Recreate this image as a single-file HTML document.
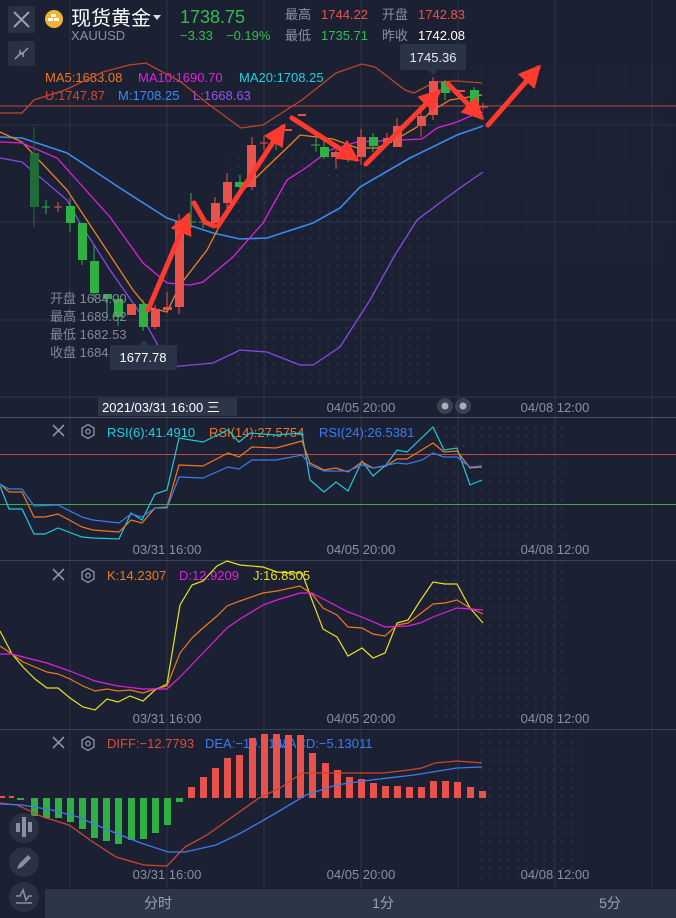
<!DOCTYPE html>
<html><head><meta charset="utf-8"><style>
html,body{margin:0;padding:0;background:#1b2132;}
svg{display:block;font-family:"Liberation Sans","Noto Sans CJK SC",sans-serif;}
</style></head><body>
<svg width="676" height="918" viewBox="0 0 676 918" xmlns="http://www.w3.org/2000/svg">
<defs>
<pattern id="dots" width="9" height="9" patternUnits="userSpaceOnUse"><circle cx="4.5" cy="4.5" r="1.6" fill="#263049"/></pattern>
<marker id="ah" viewBox="0 0 10 10" refX="8" refY="5" markerWidth="4.5" markerHeight="4.5" orient="auto"><path d="M0,0L10,5L0,10z" fill="#ff3b30"/></marker>
</defs>
<rect width="676" height="918" fill="#1b2132"/>
<rect x="230" y="150" width="200" height="240" fill="url(#dots)" opacity="0.6"/>
<rect x="430" y="60" width="240" height="200" fill="url(#dots)" opacity="0.35"/>
<rect x="430" y="420" width="140" height="300" fill="url(#dots)" opacity="0.6"/>
<rect x="480" y="730" width="100" height="150" fill="url(#dots)" opacity="0.6"/>
<g stroke="#2a3245" stroke-width="1">
<line x1="70" y1="0" x2="70" y2="888"/><line x1="167" y1="0" x2="167" y2="888"/><line x1="264" y1="0" x2="264" y2="888"/><line x1="361" y1="0" x2="361" y2="888"/><line x1="458" y1="0" x2="458" y2="888"/><line x1="555" y1="0" x2="555" y2="888"/><line x1="652" y1="0" x2="652" y2="888"/>
<line x1="0" y1="125" x2="676" y2="125"/><line x1="0" y1="222" x2="676" y2="222"/><line x1="0" y1="320" x2="676" y2="320"/>
</g>
<line x1="0" y1="106" x2="676" y2="106" stroke="#b84a44" stroke-width="1"/>
<rect x="8" y="6" width="27" height="27" rx="2" fill="#2a3142"/>
<path d="M14,12L29,27M29,12L14,27" stroke="#9aa1ae" stroke-width="2"/>
<rect x="8" y="41" width="27" height="25" rx="2" fill="#2a3142"/>
<path d="M15,59L20,54M28,48L23,53M20,54l0,-4M20,54l4,0M23,53l0,4M23,53l-4,0" stroke="#8a91a0" stroke-width="1.6" fill="none"/>
<circle cx="54" cy="19" r="9" fill="#f2b431"/>
<rect x="51" y="14" width="5" height="3" fill="#fff"/><rect x="48" y="18" width="5" height="3" fill="#fff"/><rect x="54" y="18" width="5" height="3" fill="#fff"/>
<text x="71" y="25" font-size="20" fill="#fff">现货黄金</text>
<path d="M153,15l8,0l-4,5z" fill="#ddd"/>
<text x="180" y="23" font-size="18" fill="#2fbf4e">1738.75</text>
<text x="71" y="40" font-size="13" fill="#8a90a0">XAUUSD</text>
<text x="180" y="40" font-size="13" fill="#2fbf4e">−3.33</text>
<text x="226" y="40" font-size="13" fill="#2fbf4e">−0.19%</text>
<text x="285" y="19" font-size="13" fill="#8a90a0">最高</text>
<text x="321" y="19" font-size="13" fill="#f0504a">1744.22</text>
<text x="382" y="19" font-size="13" fill="#8a90a0">开盘</text>
<text x="418" y="19" font-size="13" fill="#f0504a">1742.83</text>
<text x="285" y="40" font-size="13" fill="#8a90a0">最低</text>
<text x="321" y="40" font-size="13" fill="#2fbf4e">1735.71</text>
<text x="382" y="40" font-size="13" fill="#8a90a0">昨收</text>
<text x="418" y="40" font-size="13" fill="#fff">1742.08</text>
<text x="45" y="82" font-size="13" fill="#f07820">MA5:1683.08</text>
<text x="138" y="82" font-size="13" fill="#e020e0">MA10:1690.70</text>
<text x="239" y="82" font-size="13" fill="#20d0e0">MA20:1708.25</text>
<text x="45" y="100" font-size="13" fill="#d04a30">U:1747.87</text>
<text x="118" y="100" font-size="13" fill="#3a8cf0">M:1708.25</text>
<text x="193" y="100" font-size="13" fill="#9a50f0">L:1668.63</text>
<g fill="none" stroke-width="1.3">
<polyline stroke="#c0442c" points="0,113 22,113 34,100 65,90 103,72 129,65 146,63 181,82 207,103 241,128 263,125 302,100 336,73 362,64 375,67 405,90 414,93 435,82 457,81 482,83"/>
<polyline stroke="#3a8cf0" stroke-width="1.6" points="0,137 22,138 67,153 123,190 167,218 213,233 240,239 267,238 313,223 340,208 360,187 410,158 457,135 483,126"/>
<polyline stroke="#8a48e8" points="0,158 22,162 67,200 80,223 110,270 140,313 170,367 213,363 240,350 267,352 300,365 313,365 340,347 370,300 395,255 417,220 433,208 457,190 483,172"/>
<polyline stroke="#f08020" points="0,132 22,142 67,190 100,240 133,290 147,307 167,312 180,285 207,250 233,200 267,167 290,145 300,135 333,139 357,148 377,148 400,137 417,127 430,112 450,100 482,95"/>
<polyline stroke="#e020e0" points="0,142 22,143 57,158 83,187 110,217 143,263 167,283 190,285 203,282 233,257 263,223 287,180 307,167 330,150 357,142 422,139 437,128 457,122 473,115 483,112"/>
</g>
<g stroke-width="1">
<line x1="34" y1="127" x2="34" y2="227" stroke="#1f6b3a"/><rect x="30" y="153" width="9" height="54" fill="#1f6b3a"/>
<line x1="46" y1="200" x2="46" y2="214" stroke="#2fb043"/><line x1="42" y1="207" x2="50" y2="207" stroke="#2fb043"/>
<line x1="58" y1="202" x2="58" y2="212" stroke="#e8524a"/><line x1="54" y1="207" x2="62" y2="207" stroke="#e8524a"/>
<line x1="70" y1="198" x2="70" y2="232" stroke="#2fb043"/><rect x="66" y="206" width="9" height="17" fill="#2fb043"/>
<line x1="82" y1="223" x2="82" y2="265" stroke="#2fb043"/><rect x="78" y="223" width="9" height="37" fill="#2fb043"/>
<line x1="94" y1="245" x2="94" y2="300" stroke="#2fb043"/><rect x="90" y="261" width="9" height="32" fill="#2fb043"/>
<line x1="107" y1="294" x2="107" y2="318" stroke="#2fb043"/><rect x="103" y="294" width="9" height="5" fill="#2fb043"/>
<line x1="118" y1="295" x2="118" y2="326" stroke="#2fb043"/><rect x="114" y="299" width="9" height="18" fill="#2fb043"/>
<rect x="127" y="304" width="9" height="11" fill="#e8524a"/>
<line x1="143" y1="300" x2="143" y2="331" stroke="#2fb043"/><rect x="139" y="304" width="9" height="23" fill="#2fb043"/>
<line x1="155" y1="305" x2="155" y2="329" stroke="#e8524a"/><rect x="151" y="309" width="9" height="18" fill="#e8524a"/>
<line x1="167" y1="292" x2="167" y2="312" stroke="#e8524a"/><rect x="163" y="307" width="9" height="3" fill="#e8524a"/>
<line x1="179" y1="214" x2="179" y2="314" stroke="#e8524a"/><rect x="175" y="221" width="9" height="86" fill="#e8524a"/>
<line x1="191" y1="193" x2="191" y2="228" stroke="#2fb043"/><line x1="187" y1="222" x2="196" y2="222" stroke="#2fb043"/>
<line x1="203" y1="215" x2="203" y2="228" stroke="#2fb043"/><line x1="199" y1="222" x2="208" y2="222" stroke="#2fb043"/>
<line x1="215" y1="197" x2="215" y2="226" stroke="#e8524a"/><rect x="211" y="203" width="9" height="20" fill="#e8524a"/>
<line x1="227" y1="173" x2="227" y2="212" stroke="#e8524a"/><rect x="223" y="182" width="9" height="21" fill="#e8524a"/>
<line x1="240" y1="175" x2="240" y2="190" stroke="#2fb043"/><rect x="235" y="182" width="9" height="5" fill="#2fb043"/>
<line x1="252" y1="137" x2="252" y2="190" stroke="#e8524a"/><rect x="247" y="145" width="9" height="42" fill="#e8524a"/>
<line x1="264" y1="136" x2="264" y2="150" stroke="#e8524a"/><line x1="260" y1="143" x2="268" y2="143" stroke="#e8524a"/>
<line x1="276" y1="138" x2="276" y2="150" stroke="#2fb043"/><line x1="272" y1="143" x2="280" y2="143" stroke="#2fb043"/>
<rect x="283" y="129" width="9" height="2" fill="#e8524a"/>
<rect x="298" y="114" width="8" height="2" fill="#e8524a"/>
<line x1="316" y1="138" x2="316" y2="152" stroke="#2fb043"/><line x1="311" y1="145" x2="320" y2="145" stroke="#2fb043"/>
<line x1="324" y1="140" x2="324" y2="159" stroke="#2fb043"/><rect x="320" y="147" width="9" height="10" fill="#2fb043"/>
<line x1="336" y1="150" x2="336" y2="169" stroke="#e8524a"/><rect x="331" y="152" width="9" height="5" fill="#e8524a"/>
<line x1="348" y1="145" x2="348" y2="162" stroke="#2fb043"/><rect x="344" y="153" width="9" height="4" fill="#2fb043"/>
<line x1="361" y1="129" x2="361" y2="165" stroke="#e8524a"/><rect x="357" y="137" width="9" height="20" fill="#e8524a"/>
<line x1="373" y1="133" x2="373" y2="152" stroke="#2fb043"/><rect x="369" y="137" width="9" height="9" fill="#2fb043"/>
<line x1="387" y1="133" x2="387" y2="146" stroke="#e8524a"/><rect x="383" y="138" width="9" height="5" fill="#e8524a"/>
<line x1="397" y1="118" x2="397" y2="147" stroke="#e8524a"/><rect x="393" y="126" width="9" height="21" fill="#e8524a"/>
<line x1="421" y1="106" x2="421" y2="137" stroke="#e8524a"/><rect x="417" y="116" width="9" height="10" fill="#e8524a"/>
<line x1="433" y1="77" x2="433" y2="120" stroke="#e8524a"/><rect x="429" y="81" width="9" height="34" fill="#e8524a"/>
<line x1="445" y1="80" x2="445" y2="100" stroke="#2fb043"/><rect x="441" y="82" width="9" height="11" fill="#2fb043"/>
<rect x="457" y="90" width="8" height="2" fill="#e8524a"/>
<line x1="474" y1="87" x2="474" y2="110" stroke="#2fb043"/><rect x="470" y="90" width="9" height="15" fill="#2fb043"/>
<line x1="483" y1="103" x2="483" y2="110" stroke="#e8524a"/><line x1="479" y1="107" x2="488" y2="107" stroke="#e8524a"/>
</g>
<g stroke="#ff3b30" stroke-width="5" fill="none" stroke-linecap="round">
<line x1="148" y1="310" x2="188" y2="216" marker-end="url(#ah)"/>
<polyline points="194,203 205,222 214,226" />
<line x1="218" y1="226" x2="283" y2="127" marker-end="url(#ah)"/>
<line x1="292" y1="118" x2="356" y2="159" marker-end="url(#ah)"/>
<line x1="366" y1="164" x2="438" y2="92" marker-end="url(#ah)"/>
<line x1="448" y1="84" x2="481" y2="117" marker-end="url(#ah)"/>
<line x1="488" y1="125" x2="538" y2="68" marker-end="url(#ah)"/>
</g>
<rect x="400" y="44" width="66" height="26" rx="2" fill="#2a3348"/>
<path d="M428,70l5,5l5,-5z" fill="#2a3348"/>
<text x="433" y="62" font-size="13" fill="#e8eaf0" text-anchor="middle">1745.36</text>
<g font-size="13" fill="#8e94a2" opacity="0.9">
<text x="50" y="303">开盘 1684.00</text><text x="50" y="321">最高 1689.02</text><text x="50" y="339">最低 1682.53</text><text x="50" y="357">收盘 1684.71</text>
</g>
<path d="M139,345l5,-5l5,5z" fill="#2a3348"/>
<rect x="110" y="345" width="67" height="25" rx="2" fill="#2a3348"/>
<text x="143" y="362" font-size="13" fill="#fff" text-anchor="middle">1677.78</text>
<line x1="0" y1="397" x2="676" y2="397" stroke="#2e3648"/>
<rect x="98" y="398" width="139" height="18" fill="#2d3549"/>
<text x="102" y="412" font-size="13" fill="#fff">2021/03/31 16:00 三</text>
<text x="361" y="412" font-size="13" fill="#8a90a0" text-anchor="middle">04/05 20:00</text>
<text x="555" y="412" font-size="13" fill="#8a90a0" text-anchor="middle">04/08 12:00</text>
<circle cx="445" cy="406" r="8" fill="#3a4152"/><circle cx="445" cy="406" r="3.5" fill="#a9aeb8"/>
<circle cx="463" cy="406" r="8" fill="#3a4152"/><circle cx="463" cy="406" r="3.5" fill="#a9aeb8"/>
<line x1="0" y1="417.5" x2="676" y2="417.5" stroke="#4a5266"/>
<g id="ico">
<path d="M53,425L64,436M64,425L53,436" stroke="#8a90a0" stroke-width="1.6"/>
<path d="M88,424.5l6,3.5v7l-6,3.5l-6,-3.5v-7z" fill="none" stroke="#8a90a0" stroke-width="1.4"/><circle cx="88" cy="431.5" r="2.2" fill="none" stroke="#8a90a0" stroke-width="1.3"/>
</g>
<text x="107" y="437" font-size="13" fill="#20d0e0">RSI(6):41.4910</text>
<text x="209" y="437" font-size="13" fill="#f07820">RSI(14):27.5754</text>
<text x="319" y="437" font-size="13" fill="#3a7cf0">RSI(24):26.5381</text>
<line x1="0" y1="454.5" x2="676" y2="454.5" stroke="#b84a44"/>
<line x1="0" y1="504.5" x2="676" y2="504.5" stroke="#2fb043"/>
<g fill="none" stroke-width="1.2">
<polyline stroke="#20c8d8" points="0,486 9,509 22,509 34,534 45,534 58,528 82,537 93,538 119,539 131,513 142,520 155,494 167,490 179,438 203,442 228,430 239,442 250,433 276,435 302,433 310,480 324,492 336,482 348,491 362,461 373,476 386,465 397,450 407,452 433,427 444,450 457,448 470,485 482,480"/>
<polyline stroke="#f07820" points="0,484 9,492 22,492 34,517 45,517 58,514 82,527 93,530 119,532 131,520 142,523 155,508 167,507 179,465 203,466 228,453 239,457 252,447 276,448 302,441 310,463 324,470 336,468 348,472 362,462 373,468 386,466 397,459 407,459 433,443 444,452 457,451 470,468 482,467"/>
<polyline stroke="#3a7cf0" points="0,484 9,489 22,489 34,506 58,505 82,517 93,520 119,523 131,514 142,517 155,508 167,508 179,477 203,478 228,467 239,469 252,460 276,460 302,455 310,465 324,471 348,471 362,465 373,468 397,463 407,464 422,460 433,453 444,457 457,457 470,467 482,466"/>
</g>
<g font-size="13" fill="#8a90a0" text-anchor="middle">
<text x="167" y="554">03/31 16:00</text><text x="361" y="554">04/05 20:00</text><text x="555" y="554">04/08 12:00</text>
</g>
<line x1="0" y1="560.5" x2="676" y2="560.5" stroke="#3a4256"/>
<use href="#ico" y="144"/>
<text x="107" y="580" font-size="13" fill="#f07820">K:14.2307</text>
<text x="179" y="580" font-size="13" fill="#e020e0">D:12.9209</text>
<text x="253" y="580" font-size="13" fill="#e8e020">J:16.8505</text>
<g fill="none" stroke-width="1.2">
<polyline stroke="#e8e020" points="0,631 12,654 23,667 35,679 47,688 58,688 70,698 83,707 95,710 107,699 118,702 130,696 143,701 155,690 167,684 180,605 192,585 203,581 217,566 227,561 240,565 263,567 277,572 290,573 302,573 312,600 323,629 337,637 348,656 362,648 373,658 385,653 397,623 408,620 420,601 433,582 445,584 457,584 470,608 483,623"/>
<polyline stroke="#f07820" points="0,646 12,654 23,662 35,667 47,672 58,674 70,679 83,686 95,691 107,689 118,691 130,690 143,693 155,689 167,686 180,653 192,638 203,628 217,616 227,606 240,601 263,593 277,591 300,586 312,594 323,608 337,615 348,627 362,628 373,634 385,636 397,625 408,623 420,614 433,604 445,603 457,600 470,608 483,614"/>
<polyline stroke="#e020e0" points="0,654 12,654 23,657 47,663 70,671 95,681 118,686 143,689 167,689 180,677 203,653 227,628 240,619 263,605 277,600 300,593 312,593 348,612 362,617 385,627 408,626 420,623 433,617 457,608 483,610"/>
</g>
<g font-size="13" fill="#8a90a0" text-anchor="middle">
<text x="167" y="723">03/31 16:00</text><text x="361" y="723">04/05 20:00</text><text x="555" y="723">04/08 12:00</text>
</g>
<line x1="0" y1="729.5" x2="676" y2="729.5" stroke="#3a4256"/>
<use href="#ico" y="312"/>
<text x="107" y="748" font-size="13" fill="#e04a3a">DIFF:−12.7793</text>
<text x="205" y="748" font-size="13" fill="#3a7cf0">DEA:−10.2142</text>
<text x="277" y="748" font-size="13" fill="#3a7cf0">MACD:−5.13011</text>
<g fill="#2fb043">
<rect x="17" y="798" width="7" height="2"/>
<rect x="31" y="798" width="7" height="18"/><rect x="43" y="798" width="7" height="20"/><rect x="55" y="798" width="7" height="20"/><rect x="67" y="798" width="7" height="24"/><rect x="79" y="798" width="7" height="31"/><rect x="91" y="798" width="7" height="40"/><rect x="103" y="798" width="7" height="43"/><rect x="115" y="798" width="7" height="46"/><rect x="128" y="798" width="7" height="42"/><rect x="140" y="798" width="7" height="41"/><rect x="152" y="798" width="7" height="35"/><rect x="164" y="798" width="7" height="27"/><rect x="176" y="798" width="7" height="4"/>
</g>
<g fill="#e8524a">
<rect x="0" y="796" width="5" height="2"/><rect x="9" y="796" width="5" height="2"/>
<rect x="188" y="787" width="7" height="11"/><rect x="200" y="777" width="7" height="21"/><rect x="212" y="768" width="7" height="30"/><rect x="224" y="758" width="7" height="40"/><rect x="236" y="755" width="7" height="43"/><rect x="249" y="738" width="7" height="60"/><rect x="261" y="734" width="7" height="64"/><rect x="273" y="734" width="7" height="64"/><rect x="285" y="735" width="7" height="63"/><rect x="297" y="735" width="7" height="63"/><rect x="309" y="753" width="7" height="45"/><rect x="322" y="763" width="7" height="35"/><rect x="334" y="770" width="7" height="28"/><rect x="346" y="777" width="7" height="21"/><rect x="358" y="779" width="7" height="19"/><rect x="370" y="783" width="7" height="15"/><rect x="382" y="786" width="7" height="12"/><rect x="394" y="786" width="7" height="12"/><rect x="406" y="787" width="7" height="11"/><rect x="418" y="787" width="7" height="11"/><rect x="430" y="781" width="7" height="17"/><rect x="442" y="781" width="7" height="17"/><rect x="454" y="782" width="7" height="16"/><rect x="467" y="787" width="7" height="11"/><rect x="479" y="791" width="7" height="7"/>
</g>
<g fill="none" stroke-width="1.3">
<polyline stroke="#d0442c" points="0,803 17,805 43,817 69,825 93,842 116,857 144,865 167,866 185,847 207,835 228,820 259,798 280,788 302,773 336,773 362,773 384,773 409,770 422,768 435,763 457,761 482,763"/>
<polyline stroke="#3a7cf0" points="0,804 22,805 52,810 78,817 108,830 138,842 168,852 185,852 216,845 241,833 276,813 306,795 336,785 371,780 414,775 457,768 482,767"/>
</g>
<g font-size="13" fill="#8a90a0" text-anchor="middle">
<text x="167" y="879">03/31 16:00</text><text x="361" y="879">04/05 20:00</text><text x="555" y="879">04/08 12:00</text>
</g>
<circle cx="24" cy="828" r="15" fill="#2a3142"/>
<g fill="#8a90a0"><rect x="16" y="823" width="4" height="9"/><rect x="22" y="817" width="4" height="20"/><rect x="28" y="822" width="4" height="10"/></g>
<circle cx="24" cy="862" r="15" fill="#2a3142"/>
<path d="M17,869l2,-5l9,-9l3,3l-9,9z" fill="#8a90a0"/>
<circle cx="24" cy="897" r="15" fill="#2a3142"/>
<path d="M16,896l4,0l3,-6l3,10l3,-4l3,0M16,903l16,0" stroke="#8a90a0" stroke-width="1.6" fill="none"/>
<rect x="45" y="889" width="631" height="29" fill="#2d3549"/>
<g font-size="14" fill="#9aa3b5" text-anchor="middle">
<text x="158" y="908">分时</text><text x="383" y="908">1分</text><text x="610" y="908">5分</text>
</g>
</svg>
</body></html>
